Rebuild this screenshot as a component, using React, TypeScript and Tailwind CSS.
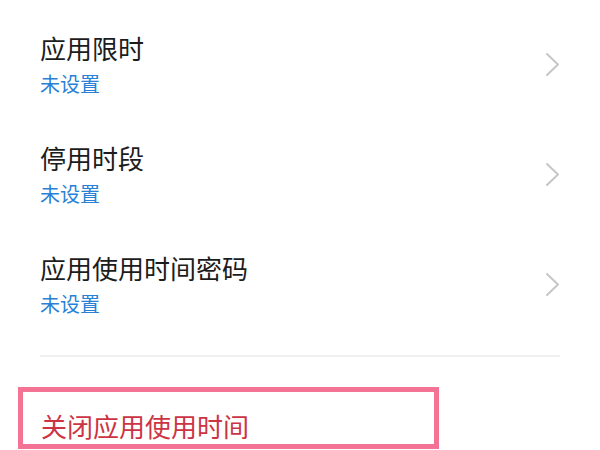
import React from 'react';

const rows = [
  { title: '应用限时', value: '未设置' },
  { title: '停用时段', value: '未设置' },
  { title: '应用使用时间密码', value: '未设置' },
];

function Chevron() {
  return (
    <svg width="15" height="25" viewBox="0 0 15 25" fill="none">
      <path d="M2 2 L13 12.5 L2 23" stroke="#c6c6c6" strokeWidth="2" strokeLinecap="round" strokeLinejoin="round" />
    </svg>
  );
}

export default function App() {
  return (
    <div
      className="w-[600px] h-[450px] overflow-hidden bg-white"
      style={{ fontFamily: '"Noto Sans CJK SC", "Noto Sans", sans-serif' }}
    >
      {/* Settings rows */}
      <div className="flex flex-col gap-[51px] pt-[35px] pl-[40px] pr-[40px]">
        {rows.map((row) => (
          <div key={row.title} className="flex items-center justify-between">
            <div className="flex flex-col gap-[13px]">
              <div className="text-[26px] leading-[26px] text-[#1c1c1c]">{row.title}</div>
              <div className="text-[20px] leading-[20px] text-[#2a7fd6]">{row.value}</div>
            </div>
            <Chevron />
          </div>
        ))}
      </div>

      {/* Divider */}
      <div className="mx-[40px] mt-[41px] h-[2px] bg-[#efefef]" />

      {/* Highlighted action */}
      <div className="mt-[30px] ml-[18px] w-[421px] border-[5px] border-[#f27393] pt-[21px] pb-[5px] pl-[18px]">
        <div className="text-[26px] leading-[26px] text-[#cc3444]">关闭应用使用时间</div>
      </div>
    </div>
  );
}
